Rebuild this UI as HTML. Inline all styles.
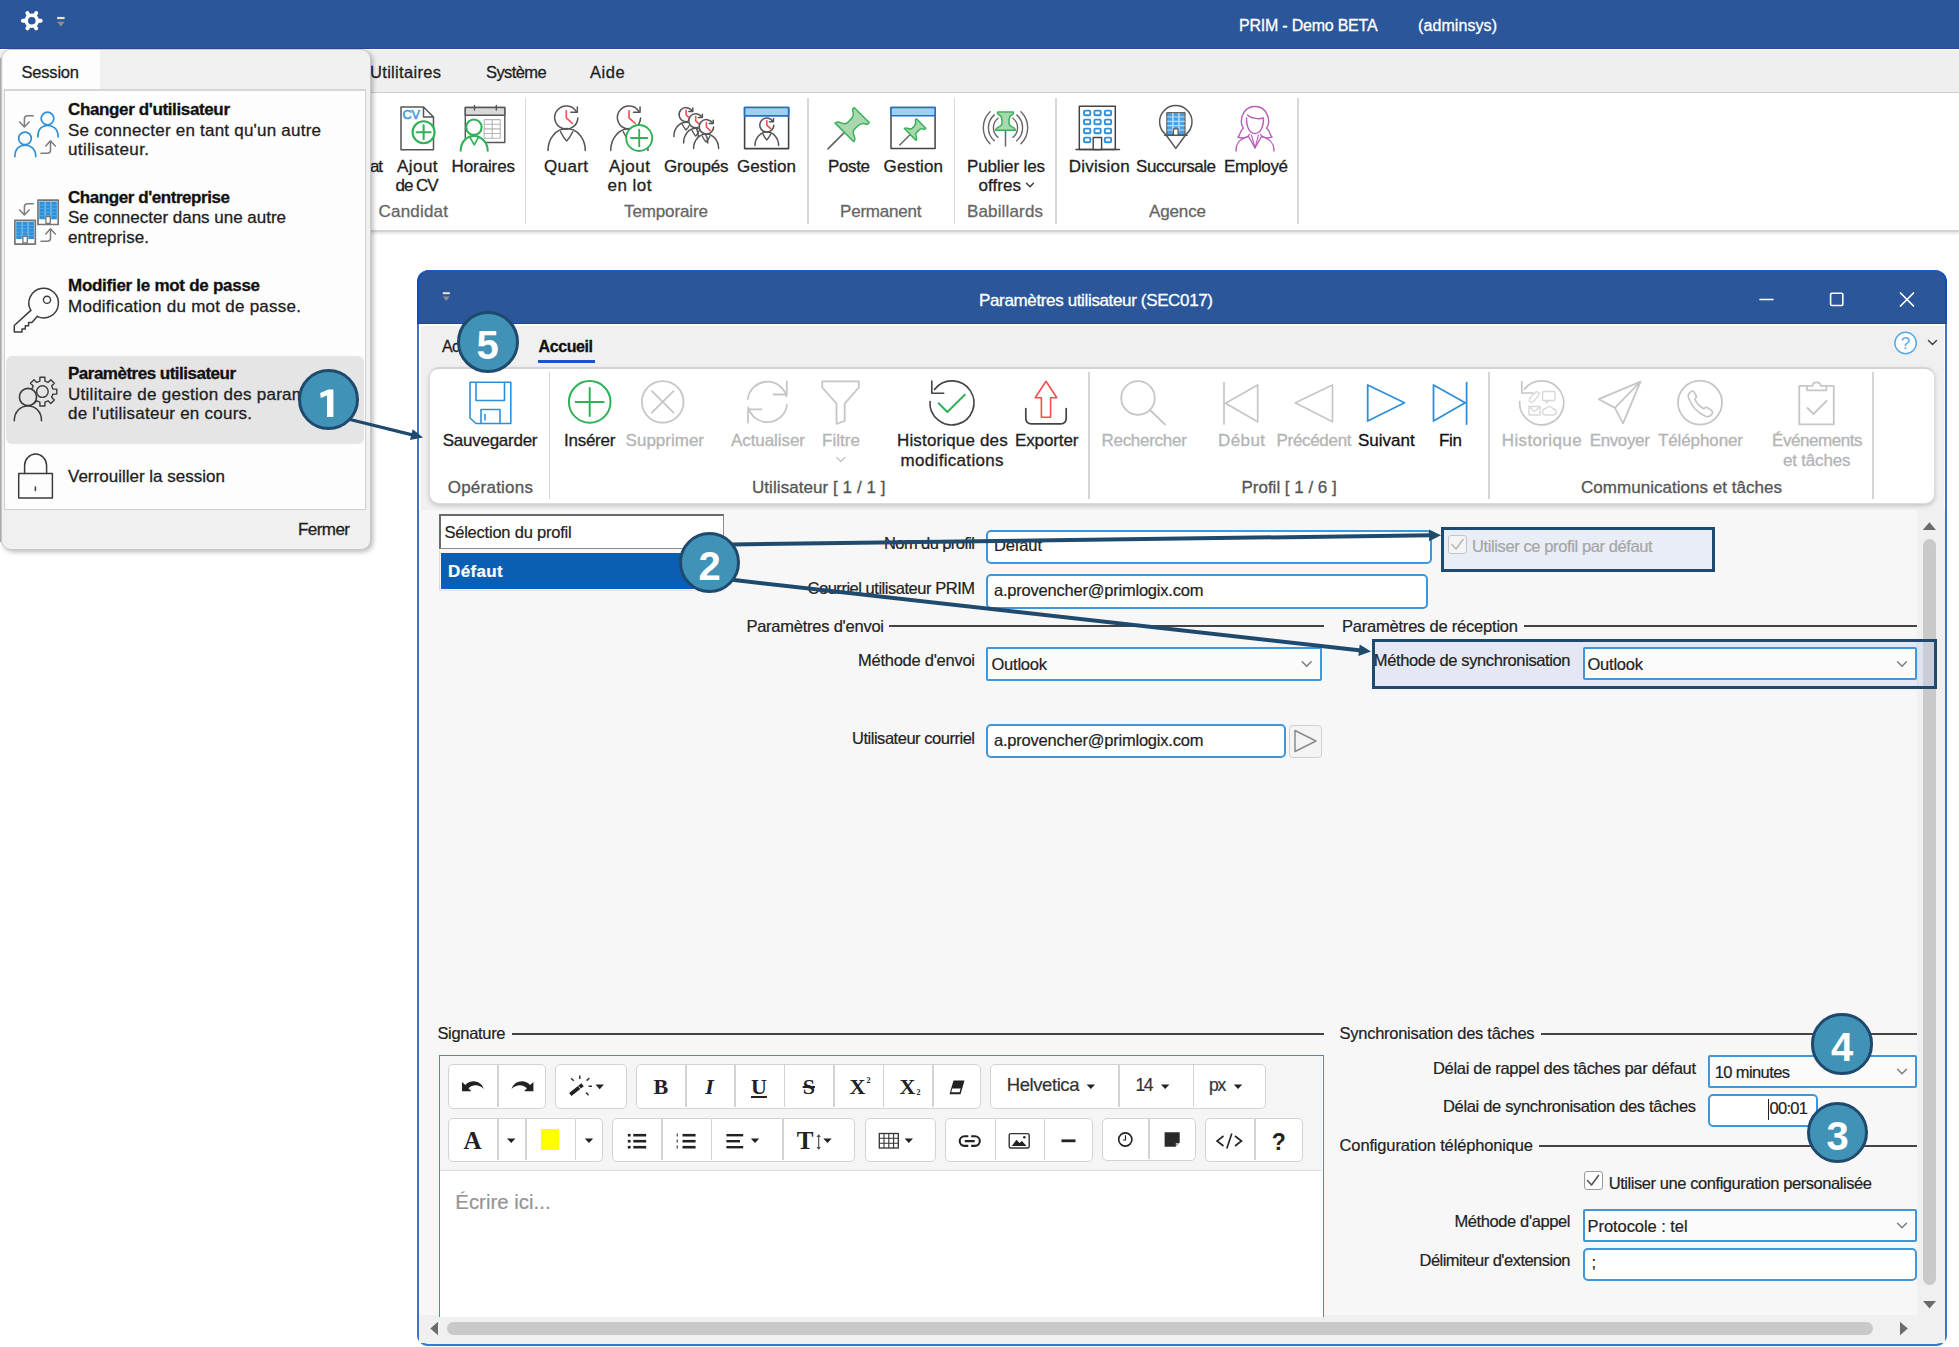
<!DOCTYPE html>
<html><head><meta charset="utf-8"><title>PRIM</title>
<style>
html,body{margin:0;padding:0;}
body{width:1959px;height:1347px;overflow:hidden;background:#fff;font-family:"Liberation Sans",sans-serif;position:relative;}
div,span.t,svg{position:absolute;box-sizing:border-box;}
span.t{white-space:nowrap;line-height:20px;height:20px;}
svg{overflow:visible;}
</style></head><body>
<div style="left:0px;top:0px;width:1959px;height:49px;background:#2b579a;"></div>
<span class="t" style="left:1239.0px;top:16.1px;font-size:16px;letter-spacing:-0.223px;color:#fff;-webkit-text-stroke:0.3px;">PRIM - Demo BETA</span>
<span class="t" style="left:1418.0px;top:16.1px;font-size:16px;letter-spacing:0.085px;color:#fff;-webkit-text-stroke:0.3px;">(adminsys)</span>
<div style="left:0px;top:47.5px;width:1959px;height:1.5px;background:#244f92;"></div>
<div style="left:0px;top:49px;width:1959px;height:44px;background:#efefef;border-top:1px solid #fff;"></div>
<span class="t" style="left:370.0px;top:61.6px;font-size:16.5px;letter-spacing:0.315px;color:#1e1e1e;-webkit-text-stroke:0.3px;">Utilitaires</span>
<span class="t" style="left:486.0px;top:61.6px;font-size:16.5px;letter-spacing:-0.581px;color:#1e1e1e;-webkit-text-stroke:0.3px;">Système</span>
<span class="t" style="left:590.0px;top:61.6px;font-size:16.5px;letter-spacing:0.525px;color:#1e1e1e;-webkit-text-stroke:0.3px;">Aide</span>
<div style="left:0px;top:92px;width:1959px;height:140px;background:#fff;border-top:1.5px solid #cfcfcf;border-bottom:2px solid #d2d2d2;box-shadow:0 2px 2px rgba(0,0,0,.10);"></div>
<div style="left:524.5px;top:98px;width:1px;height:126px;background:#d8d8d8;width:1.5px;"></div>
<div style="left:807.0px;top:98px;width:1px;height:126px;background:#d8d8d8;width:1.5px;"></div>
<div style="left:953.5px;top:98px;width:1px;height:126px;background:#d8d8d8;width:1.5px;"></div>
<div style="left:1055.1px;top:98px;width:1px;height:126px;background:#d8d8d8;width:1.5px;"></div>
<div style="left:1297.2px;top:98px;width:1px;height:126px;background:#d8d8d8;width:1.5px;"></div>
<span class="t" style="left:370.0px;top:156.6px;font-size:17px;letter-spacing:-1.178px;color:#1e1e1e;-webkit-text-stroke:0.3px;">at</span>
<span class="t" style="left:397.0px;top:156.6px;font-size:17px;letter-spacing:0.438px;color:#1e1e1e;-webkit-text-stroke:0.3px;">Ajout</span>
<span class="t" style="left:395.5px;top:175.7px;font-size:17px;letter-spacing:-1.062px;color:#1e1e1e;-webkit-text-stroke:0.3px;">de CV</span>
<span class="t" style="left:451.6px;top:156.6px;font-size:17px;letter-spacing:-0.120px;color:#1e1e1e;-webkit-text-stroke:0.3px;">Horaires</span>
<span class="t" style="left:544.0px;top:156.6px;font-size:17px;letter-spacing:0.371px;color:#1e1e1e;-webkit-text-stroke:0.3px;">Quart</span>
<span class="t" style="left:609.0px;top:156.6px;font-size:17px;letter-spacing:0.563px;color:#1e1e1e;-webkit-text-stroke:0.3px;">Ajout</span>
<span class="t" style="left:607.5px;top:175.7px;font-size:17px;letter-spacing:0.483px;color:#1e1e1e;-webkit-text-stroke:0.3px;">en lot</span>
<span class="t" style="left:664.0px;top:156.6px;font-size:17px;letter-spacing:-0.100px;color:#1e1e1e;-webkit-text-stroke:0.3px;">Groupés</span>
<span class="t" style="left:737.0px;top:156.6px;font-size:17px;letter-spacing:0.069px;color:#1e1e1e;-webkit-text-stroke:0.3px;">Gestion</span>
<span class="t" style="left:828.0px;top:156.6px;font-size:17px;letter-spacing:-0.368px;color:#1e1e1e;-webkit-text-stroke:0.3px;">Poste</span>
<span class="t" style="left:883.5px;top:156.6px;font-size:17px;letter-spacing:0.152px;color:#1e1e1e;-webkit-text-stroke:0.3px;">Gestion</span>
<span class="t" style="left:967.0px;top:156.6px;font-size:17px;letter-spacing:-0.137px;color:#1e1e1e;-webkit-text-stroke:0.3px;">Publier les</span>
<span class="t" style="left:978.6px;top:175.7px;font-size:17px;letter-spacing:0.038px;color:#1e1e1e;-webkit-text-stroke:0.3px;">offres</span>
<span class="t" style="left:1068.8px;top:156.6px;font-size:17px;letter-spacing:0.183px;color:#1e1e1e;-webkit-text-stroke:0.3px;">Division</span>
<span class="t" style="left:1136.0px;top:156.6px;font-size:17px;letter-spacing:-0.455px;color:#1e1e1e;-webkit-text-stroke:0.3px;">Succursale</span>
<span class="t" style="left:1224.0px;top:156.6px;font-size:17px;letter-spacing:-0.357px;color:#1e1e1e;-webkit-text-stroke:0.3px;">Employé</span>
<span class="t" style="left:378.6px;top:201.7px;font-size:17px;letter-spacing:0.193px;color:#666;-webkit-text-stroke:0.3px;">Candidat</span>
<span class="t" style="left:624.0px;top:201.7px;font-size:17px;letter-spacing:-0.115px;color:#666;-webkit-text-stroke:0.3px;">Temporaire</span>
<span class="t" style="left:840.0px;top:201.7px;font-size:17px;letter-spacing:-0.207px;color:#666;-webkit-text-stroke:0.3px;">Permanent</span>
<span class="t" style="left:967.0px;top:201.7px;font-size:17px;letter-spacing:0.150px;color:#666;-webkit-text-stroke:0.3px;">Babillards</span>
<span class="t" style="left:1149.0px;top:201.7px;font-size:17px;letter-spacing:-0.132px;color:#666;-webkit-text-stroke:0.3px;">Agence</span>
<div style="left:1px;top:49px;width:370px;height:501px;background:#f0f0f0;border-radius:10px;border:1px solid #c9c9c9;box-shadow:2px 2px 5px rgba(0,0,0,.28);"></div>
<div style="left:3px;top:50px;width:97.2px;height:40px;background:#fdfdfd;border-radius:8px 0 0 0;"></div>
<div style="left:0px;top:58px;width:2.2px;height:484px;background:linear-gradient(to right,#a0a0a0,#cfcfcf);"></div>
<span class="t" style="left:21.5px;top:61.8px;font-size:16.5px;letter-spacing:-0.200px;color:#1e1e1e;-webkit-text-stroke:0.3px;">Session</span>
<div style="left:4px;top:89px;width:362px;height:421px;background:#fdfdfd;border:1px solid #d0d0d0;border-top:2px solid #d6d6d6;"></div>
<div style="left:5.5px;top:355.5px;width:358.5px;height:88px;background:#e5e5e5;border-radius:6px;"></div>
<span class="t" style="left:68.0px;top:99.5px;font-size:17px;letter-spacing:-0.367px;color:#111;font-weight:bold;-webkit-text-stroke:0.3px;">Changer d'utilisateur</span>
<span class="t" style="left:68.0px;top:121.0px;font-size:17px;letter-spacing:0.221px;color:#1e1e1e;-webkit-text-stroke:0.3px;">Se connecter en tant qu'un autre</span>
<span class="t" style="left:68.0px;top:139.5px;font-size:17px;letter-spacing:0.405px;color:#1e1e1e;-webkit-text-stroke:0.3px;">utilisateur.</span>
<span class="t" style="left:68.0px;top:187.5px;font-size:17px;letter-spacing:-0.437px;color:#111;font-weight:bold;-webkit-text-stroke:0.3px;">Changer d'entreprise</span>
<span class="t" style="left:68.0px;top:208.0px;font-size:17px;letter-spacing:-0.012px;color:#1e1e1e;-webkit-text-stroke:0.3px;">Se connecter dans une autre</span>
<span class="t" style="left:68.0px;top:227.5px;font-size:17px;letter-spacing:0.068px;color:#1e1e1e;-webkit-text-stroke:0.3px;">entreprise.</span>
<span class="t" style="left:68.0px;top:276.0px;font-size:17px;letter-spacing:-0.277px;color:#111;font-weight:bold;-webkit-text-stroke:0.3px;">Modifier le mot de passe</span>
<span class="t" style="left:68.0px;top:297.0px;font-size:17px;letter-spacing:0.255px;color:#1e1e1e;-webkit-text-stroke:0.3px;">Modification du mot de passe.</span>
<span class="t" style="left:68.0px;top:363.6px;font-size:17px;letter-spacing:-0.504px;color:#111;font-weight:bold;-webkit-text-stroke:0.3px;">Paramètres utilisateur</span>
<span class="t" style="left:68.0px;top:384.7px;font-size:17px;letter-spacing:0.279px;color:#1e1e1e;-webkit-text-stroke:0.3px;">Utilitaire de gestion des param</span>
<span class="t" style="left:68.0px;top:404.0px;font-size:17px;letter-spacing:0.238px;color:#1e1e1e;-webkit-text-stroke:0.3px;">de l'utilisateur en cours.</span>
<span class="t" style="left:68.0px;top:467.0px;font-size:17px;letter-spacing:0.007px;color:#1e1e1e;-webkit-text-stroke:0.3px;">Verrouiller la session</span>
<span class="t" style="left:298.0px;top:520.0px;font-size:17px;letter-spacing:-0.555px;color:#1e1e1e;-webkit-text-stroke:0.3px;">Fermer</span>
<div style="left:417px;top:270px;width:1530px;height:1076px;background:#f0f0f0;border:2px solid #3776d3;border-radius:12px 12px 11px 11px;overflow:hidden;"></div>
<div style="left:417px;top:270px;width:1530px;height:53.5px;background:#2b579a;border-radius:12px 12px 0 0;border-left:2px solid #0f4fb3;border-right:2px solid #0f4fb3;border-top:1.5px solid #1a5cc4;border-bottom:1.5px solid #1d4990;"></div>
<div style="left:419px;top:323.5px;width:1526px;height:2px;background:#fdfcf9;"></div>
<div style="left:419px;top:323.5px;width:1.5px;height:1020px;background:#fdfcf9;"></div>
<div style="left:1943.5px;top:323.5px;width:1.5px;height:1020px;background:#fdfcf9;"></div>
<span class="t" style="left:979.0px;top:290.5px;font-size:17px;letter-spacing:-0.357px;color:#fff;-webkit-text-stroke:0.3px;">Paramètres utilisateur (SEC017)</span>
<div style="left:419px;top:510px;width:1498px;height:805px;background:#f7f7f7;"></div>
<div style="left:1917px;top:510px;width:28px;height:832px;background:#f0f0f0;"></div>
<div style="left:419px;top:1315px;width:1526px;height:28px;background:#f0f0f0;"></div>
<div style="left:428.5px;top:366.8px;width:1506.5px;height:137.2px;background:#fff;border:1px solid #dcdcdc;border-top:2px solid #d3d3d3;border-radius:10px;box-shadow:0 2px 4px rgba(0,0,0,.18);"></div>
<div style="left:548.8px;top:372px;width:1.5px;height:127px;background:#d6d6d6;"></div>
<div style="left:1088.0px;top:372px;width:1.5px;height:127px;background:#d6d6d6;"></div>
<div style="left:1488.1px;top:372px;width:1.5px;height:127px;background:#d6d6d6;"></div>
<div style="left:1872.1px;top:372px;width:1.5px;height:127px;background:#d6d6d6;"></div>
<span class="t" style="left:538.5px;top:337.4px;font-size:16px;letter-spacing:-0.402px;color:#111;font-weight:bold;-webkit-text-stroke:0.3px;">Accueil</span>
<div style="left:538px;top:359.5px;width:57px;height:3px;background:#1a56c4;"></div>
<span class="t" style="left:442.0px;top:337.4px;font-size:16px;letter-spacing:-0.672px;color:#1e1e1e;-webkit-text-stroke:0.3px;">Ac</span>
<span class="t" style="left:442.8px;top:431.0px;font-size:17px;letter-spacing:-0.264px;color:#1e1e1e;-webkit-text-stroke:0.3px;">Sauvegarder</span>
<span class="t" style="left:564.0px;top:431.0px;font-size:17px;letter-spacing:-0.252px;color:#1e1e1e;-webkit-text-stroke:0.3px;">Insérer</span>
<span class="t" style="left:625.6px;top:431.0px;font-size:17px;letter-spacing:-0.002px;color:#b4b4b4;-webkit-text-stroke:0.3px;">Supprimer</span>
<span class="t" style="left:731.0px;top:431.0px;font-size:17px;letter-spacing:-0.071px;color:#b4b4b4;-webkit-text-stroke:0.3px;">Actualiser</span>
<span class="t" style="left:822.0px;top:431.0px;font-size:17px;letter-spacing:0.045px;color:#b4b4b4;-webkit-text-stroke:0.3px;">Filtre</span>
<span class="t" style="left:897.0px;top:431.0px;font-size:17px;letter-spacing:0.156px;color:#1e1e1e;-webkit-text-stroke:0.3px;">Historique des</span>
<span class="t" style="left:900.6px;top:450.5px;font-size:17px;letter-spacing:0.307px;color:#1e1e1e;-webkit-text-stroke:0.3px;">modifications</span>
<span class="t" style="left:1015.0px;top:431.0px;font-size:17px;letter-spacing:-0.107px;color:#1e1e1e;-webkit-text-stroke:0.3px;">Exporter</span>
<span class="t" style="left:1101.5px;top:431.0px;font-size:17px;letter-spacing:-0.286px;color:#b4b4b4;-webkit-text-stroke:0.3px;">Rechercher</span>
<span class="t" style="left:1218.0px;top:431.0px;font-size:17px;letter-spacing:0.409px;color:#b4b4b4;-webkit-text-stroke:0.3px;">Début</span>
<span class="t" style="left:1276.5px;top:431.0px;font-size:17px;letter-spacing:-0.312px;color:#b4b4b4;-webkit-text-stroke:0.3px;">Précédent</span>
<span class="t" style="left:1358.0px;top:431.0px;font-size:17px;letter-spacing:-0.000px;color:#111;-webkit-text-stroke:0.3px;">Suivant</span>
<span class="t" style="left:1439.0px;top:431.0px;font-size:17px;letter-spacing:-0.308px;color:#111;-webkit-text-stroke:0.3px;">Fin</span>
<span class="t" style="left:1501.8px;top:431.0px;font-size:17px;letter-spacing:0.363px;color:#b4b4b4;-webkit-text-stroke:0.3px;">Historique</span>
<span class="t" style="left:1589.7px;top:431.0px;font-size:17px;letter-spacing:-0.377px;color:#b4b4b4;-webkit-text-stroke:0.3px;">Envoyer</span>
<span class="t" style="left:1658.0px;top:431.0px;font-size:17px;letter-spacing:-0.112px;color:#b4b4b4;-webkit-text-stroke:0.3px;">Téléphoner</span>
<span class="t" style="left:1772.0px;top:431.0px;font-size:17px;letter-spacing:-0.444px;color:#b4b4b4;-webkit-text-stroke:0.3px;">Événements</span>
<span class="t" style="left:1783.0px;top:450.5px;font-size:17px;letter-spacing:-0.198px;color:#b4b4b4;-webkit-text-stroke:0.3px;">et tâches</span>
<span class="t" style="left:447.7px;top:477.5px;font-size:17px;letter-spacing:0.238px;color:#555;-webkit-text-stroke:0.3px;">Opérations</span>
<span class="t" style="left:752.0px;top:477.5px;font-size:17px;letter-spacing:0.061px;color:#555;-webkit-text-stroke:0.3px;">Utilisateur [ 1 / 1 ]</span>
<span class="t" style="left:1241.5px;top:477.5px;font-size:17px;letter-spacing:-0.015px;color:#555;-webkit-text-stroke:0.3px;">Profil [ 1 / 6 ]</span>
<span class="t" style="left:1581.0px;top:477.5px;font-size:17px;letter-spacing:0.030px;color:#555;-webkit-text-stroke:0.3px;">Communications et tâches</span>
<div style="left:438.8px;top:514px;width:285.5px;height:34.5px;background:#fff;border:1.5px solid #8a8a8a;border-top:2px solid #6a6a6a;border-left:2px solid #6a6a6a;"></div>
<div style="left:438.5px;top:550px;width:286px;height:41px;border-left:1px solid #dcdcdc;border-bottom:1px solid #e2e2e2;border-right:1px solid #e6e6e6;"></div>
<span class="t" style="left:444.4px;top:521.9px;font-size:16.5px;letter-spacing:-0.215px;color:#222;-webkit-text-stroke:0.2px;">Sélection du profil</span>
<div style="left:441px;top:552.6px;width:283px;height:36.5px;background:#0a5fb4;"></div>
<span class="t" style="left:448.0px;top:561.6px;font-size:17px;letter-spacing:0.361px;color:#fff;font-weight:bold;-webkit-text-stroke:0.2px;">Défaut</span>
<span class="t" style="left:884.0px;top:532.7px;font-size:16.5px;letter-spacing:-0.594px;color:#222;-webkit-text-stroke:0.2px;">Nom du profil</span>
<div style="left:986.2px;top:530.3px;width:446.3px;height:33.4px;border:2px solid #3e97da;border-radius:5px;background:#fff;"></div>
<span class="t" style="left:994.0px;top:534.8px;font-size:16.5px;letter-spacing:-0.123px;color:#222;-webkit-text-stroke:0.2px;">Défaut</span>
<span class="t" style="left:807.5px;top:578.3px;font-size:16.5px;letter-spacing:-0.471px;color:#222;-webkit-text-stroke:0.2px;">Courriel utilisateur PRIM</span>
<div style="left:986.2px;top:574px;width:442.3px;height:35px;border:2px solid #3e97da;border-radius:5px;background:#fff;"></div>
<span class="t" style="left:994.0px;top:580.3px;font-size:16.5px;letter-spacing:-0.217px;color:#222;-webkit-text-stroke:0.2px;">a.provencher@primlogix.com</span>
<span class="t" style="left:746.4px;top:615.8px;font-size:16.5px;letter-spacing:-0.237px;color:#222;-webkit-text-stroke:0.2px;">Paramètres d'envoi</span>
<div style="left:889px;top:625.3px;width:435px;height:1.5px;background:#444;"></div>
<span class="t" style="left:858.0px;top:650.1px;font-size:16.5px;letter-spacing:-0.255px;color:#222;-webkit-text-stroke:0.2px;">Méthode d'envoi</span>
<div style="left:986.2px;top:646.8px;width:335.8px;height:33.8px;border:2px solid #3e97da;border-radius:5px;background:#fff;border-radius:2px;border-bottom-width:2.5px;background:#fbfbfb;"></div>
<span class="t" style="left:991.5px;top:654.3px;font-size:16.5px;letter-spacing:-0.227px;color:#222;-webkit-text-stroke:0.2px;">Outlook</span>
<span class="t" style="left:852.0px;top:728.3px;font-size:16.5px;letter-spacing:-0.476px;color:#222;-webkit-text-stroke:0.2px;">Utilisateur courriel</span>
<div style="left:986.2px;top:724.3px;width:299.6px;height:33.4px;border:2px solid #3e97da;border-radius:5px;background:#fff;"></div>
<span class="t" style="left:994.0px;top:729.8px;font-size:16.5px;letter-spacing:-0.217px;color:#222;-webkit-text-stroke:0.2px;">a.provencher@primlogix.com</span>
<div style="left:1288.8px;top:724.5px;width:33px;height:33px;background:#f4f4f4;border:1px solid #d0d0d0;border-radius:4px;"></div>
<div style="left:1440.7px;top:526.7px;width:274px;height:45px;background:#e8edf6;"></div>
<div style="left:1448px;top:535px;width:19px;height:19px;background:#f4f4f4;border:1.5px solid #c4c4c4;border-radius:3px;"></div>
<span class="t" style="left:1472.0px;top:536.3px;font-size:16.5px;letter-spacing:-0.392px;color:#a6a6a6;-webkit-text-stroke:0.2px;">Utiliser ce profil par défaut</span>
<span class="t" style="left:1342.0px;top:615.8px;font-size:16.5px;letter-spacing:-0.213px;color:#222;-webkit-text-stroke:0.2px;">Paramètres de réception</span>
<div style="left:1524px;top:625.3px;width:393px;height:1.5px;background:#444;"></div>
<div style="left:1371.5px;top:638.6px;width:546px;height:50.5px;background:#e3e8f4;"></div>
<span class="t" style="left:1373.8px;top:650.0px;font-size:16.5px;letter-spacing:-0.387px;color:#222;-webkit-text-stroke:0.2px;">Méthode de synchronisation</span>
<div style="left:1582.6px;top:646.8px;width:334.4px;height:33.6px;border:2px solid #3e97da;border-radius:5px;background:#fff;border-radius:2px;border-bottom-width:2.5px;background:#fbfbfb;"></div>
<span class="t" style="left:1587.5px;top:654.3px;font-size:16.5px;letter-spacing:-0.227px;color:#222;-webkit-text-stroke:0.2px;">Outlook</span>
<span class="t" style="left:437.4px;top:1023.3px;font-size:16.5px;letter-spacing:-0.317px;color:#222;-webkit-text-stroke:0.2px;">Signature</span>
<div style="left:511.6px;top:1033px;width:812.4px;height:1.5px;background:#444;"></div>
<div style="left:438.8px;top:1054.6px;width:885px;height:262px;background:#fff;border:1.5px solid #3a8fd0;border-bottom:none;"></div>
<div style="left:440.3px;top:1056px;width:882px;height:115px;background:#f5f5f5;border-bottom:1px solid #ddd;"></div>
<span class="t" style="left:455.3px;top:1192.3px;font-size:20.4px;letter-spacing:0.016px;color:#949494;-webkit-text-stroke:0.2px;">Écrire ici...</span>
<span class="t" style="left:1339.6px;top:1023.3px;font-size:16.5px;letter-spacing:-0.272px;color:#222;-webkit-text-stroke:0.2px;">Synchronisation des tâches</span>
<div style="left:1541px;top:1033px;width:376px;height:1.5px;background:#444;"></div>
<span class="t" style="left:1433.0px;top:1057.7px;font-size:16.5px;letter-spacing:-0.313px;color:#222;-webkit-text-stroke:0.2px;">Délai de rappel des tâches par défaut</span>
<div style="left:1708px;top:1054.8px;width:209px;height:33.2px;border:2px solid #3e97da;border-radius:5px;background:#fff;border-radius:2px;border-bottom-width:2.5px;background:#fbfbfb;"></div>
<span class="t" style="left:1714.7px;top:1062.3px;font-size:16.5px;letter-spacing:-0.601px;color:#222;-webkit-text-stroke:0.2px;">10 minutes</span>
<span class="t" style="left:1443.0px;top:1096.3px;font-size:16.5px;letter-spacing:-0.328px;color:#222;-webkit-text-stroke:0.2px;">Délai de synchronisation des tâches</span>
<div style="left:1708px;top:1093.6px;width:110px;height:33px;border:2px solid #3e97da;border-radius:5px;background:#fff;"></div>
<span class="t" style="left:1769.5px;top:1098.3px;font-size:16.5px;letter-spacing:-0.698px;color:#222;-webkit-text-stroke:0.2px;">00:01</span>
<span class="t" style="left:1339.6px;top:1135.0px;font-size:16.5px;letter-spacing:-0.153px;color:#222;-webkit-text-stroke:0.2px;">Configuration téléphonique</span>
<div style="left:1539px;top:1145.2px;width:378px;height:1.5px;background:#444;"></div>
<div style="left:1583.6px;top:1171px;width:19px;height:19px;background:#fff;border:1.5px solid #9a9a9a;border-radius:3px;"></div>
<span class="t" style="left:1608.7px;top:1172.8px;font-size:16.5px;letter-spacing:-0.433px;color:#222;-webkit-text-stroke:0.2px;">Utiliser une configuration personalisée</span>
<span class="t" style="left:1454.4px;top:1211.3px;font-size:16.5px;letter-spacing:-0.385px;color:#222;-webkit-text-stroke:0.2px;">Méthode d'appel</span>
<div style="left:1582.6px;top:1208.8px;width:334.4px;height:33.6px;border:2px solid #3e97da;border-radius:5px;background:#fff;border-radius:2px;border-bottom-width:2.5px;background:#fbfbfb;"></div>
<span class="t" style="left:1587.5px;top:1215.8px;font-size:16.5px;letter-spacing:-0.056px;color:#222;-webkit-text-stroke:0.2px;">Protocole : tel</span>
<span class="t" style="left:1419.5px;top:1250.3px;font-size:16.5px;letter-spacing:-0.515px;color:#222;-webkit-text-stroke:0.2px;">Délimiteur d'extension</span>
<div style="left:1582.6px;top:1248px;width:334.4px;height:32.5px;border:2px solid #3e97da;border-radius:5px;background:#fff;"></div>
<span class="t" style="left:1591.4px;top:1252.3px;font-size:16.5px;letter-spacing:0.000px;color:#222;-webkit-text-stroke:0.2px;">;</span>
<div style="left:1922.8px;top:539px;width:13px;height:746.4px;background:#c9c9c9;border-radius:6.5px;"></div>
<div style="left:447px;top:1322px;width:1426px;height:13px;background:#c9c9c9;border-radius:6.5px;"></div>
<svg style="left:0;top:0;" width="1959" height="1347" viewBox="0 0 1959 1347" fill="none" stroke-linecap="round" stroke-linejoin="round"><path d="M38.10 20.70 L40.70 20.70" stroke="#fff" stroke-width="3.9" stroke-linecap="round"/><path d="M34.95 26.16 L36.25 28.41" stroke="#fff" stroke-width="3.9" stroke-linecap="round"/><path d="M28.65 26.16 L27.35 28.41" stroke="#fff" stroke-width="3.9" stroke-linecap="round"/><path d="M25.50 20.70 L22.90 20.70" stroke="#fff" stroke-width="3.9" stroke-linecap="round"/><path d="M28.65 15.24 L27.35 12.99" stroke="#fff" stroke-width="3.9" stroke-linecap="round"/><path d="M34.95 15.24 L36.25 12.99" stroke="#fff" stroke-width="3.9" stroke-linecap="round"/><circle cx="31.8" cy="20.7" r="5.5" stroke="#fff" stroke-width="3.4" fill="none"/><path d="M57.1 18h7.5" stroke="#e9e2d2" stroke-width="2.2" stroke-linecap="butt"/><path d="M57.1 21.8h7.5l-3.75 4.6z" fill="#8f8f8f" stroke="none"/><path d="M442.8 293.2h7" stroke="#e9e2d2" stroke-width="2" stroke-linecap="butt"/><path d="M442.8 296.6h7l-3.5 4.3z" fill="#8f8f8f" stroke="none"/><path d="M33.3 115.8 H27.5 Q24.4 115.8 24.4 119 V126.5 M19.6 122 L24.4 127 L29.2 122" stroke="#7d7d7d" stroke-width="1.5" fill="none" /><path d="M41 153.2 H47.5 Q50.5 153.2 50.5 150 V141.3 M45.7 146 L50.5 140.8 L55.3 146" stroke="#7d7d7d" stroke-width="1.5" fill="none" /><circle cx="47.5" cy="118.5" r="6.3" stroke="#2e90d8" stroke-width="1.7" fill="none"/><path d="M37.8 136.8 C37.8 128.175 42.91 125.3 47.5 125.3 C52.09 125.3 58.2 128.175 58.2 136.8" stroke="#2e90d8" stroke-width="1.7" fill="none" /><circle cx="25" cy="138.4" r="6.3" stroke="#2e90d8" stroke-width="1.7" fill="none"/><path d="M14.9 156.4 C14.9 148.0 20.32 145.2 25 145.2 C29.68 145.2 35.7 148.0 35.7 156.4" stroke="#2e90d8" stroke-width="1.7" fill="none" /><path d="M33.3 203.8 H27.5 Q24.4 203.8 24.4 207 V214.5 M19.6 210 L24.4 215 L29.2 210" stroke="#7d7d7d" stroke-width="1.5" fill="none" /><path d="M41 241.2 H47.5 Q50.5 241.2 50.5 238 V229.3 M45.7 234 L50.5 228.8 L55.3 234" stroke="#7d7d7d" stroke-width="1.5" fill="none" /><rect x="38" y="200.2" width="20.2" height="24.3" rx="0" stroke="#757575" stroke-width="1.7" fill="#fff"/><rect x="39.3" y="201.5" width="17.599999999999998" height="17.8" fill="#2e90d8"/><path d="M45.2 201.5 V219.3" stroke="#8cc8f2" stroke-width="1.1"/><path d="M51.0 201.5 V219.3" stroke="#8cc8f2" stroke-width="1.1"/><path d="M39.3 205.1 H56.900000000000006" stroke="#5aaeea" stroke-width="0.8"/><path d="M39.3 208.6 H56.900000000000006" stroke="#5aaeea" stroke-width="0.8"/><path d="M39.3 212.2 H56.900000000000006" stroke="#5aaeea" stroke-width="0.8"/><path d="M39.3 215.7 H56.900000000000006" stroke="#5aaeea" stroke-width="0.8"/><rect x="45.9" y="216.7" width="4.4" height="6.6" rx="0" stroke="#757575" stroke-width="1.3" fill="#fff"/><rect x="14.9" y="220.4" width="20.4" height="23.8" rx="0" stroke="#757575" stroke-width="1.7" fill="#fff"/><rect x="16.2" y="221.70000000000002" width="17.799999999999997" height="17.3" fill="#2e90d8"/><path d="M22.1 221.70000000000002 V239.00000000000003" stroke="#8cc8f2" stroke-width="1.1"/><path d="M28.1 221.70000000000002 V239.00000000000003" stroke="#8cc8f2" stroke-width="1.1"/><path d="M16.2 225.2 H34.0" stroke="#5aaeea" stroke-width="0.8"/><path d="M16.2 228.6 H34.0" stroke="#5aaeea" stroke-width="0.8"/><path d="M16.2 232.1 H34.0" stroke="#5aaeea" stroke-width="0.8"/><path d="M16.2 235.5 H34.0" stroke="#5aaeea" stroke-width="0.8"/><rect x="22.900000000000002" y="236.4" width="4.4" height="6.6" rx="0" stroke="#757575" stroke-width="1.3" fill="#fff"/><path d="M30.8 310.4 L14.3 325.5 V332 H22 V329 H25.3 V325.8 H28.6 V322.6 H31.9 L37.2 316.4" stroke="#3c3c3c" stroke-width="1.5" fill="none" /><path d="M30.8 310.4 A14.8 14.8 0 1 1 37.2 316.4" stroke="#3c3c3c" stroke-width="1.5" fill="none" /><circle cx="47" cy="299.8" r="3.6" stroke="#3c3c3c" stroke-width="1.4" fill="none"/><path d="M56.78 389.09 L56.78 394.11 L52.90 394.12 L51.61 397.24 L54.34 400.00 L50.80 403.54 L48.04 400.81 L44.92 402.10 L44.91 405.98 L39.89 405.98 L39.88 402.10 L36.76 400.81 L34.00 403.54 L30.46 400.00 L33.19 397.24 L31.90 394.12 L28.02 394.11 L28.02 389.09 L31.90 389.08 L33.19 385.96 L30.46 383.20 L34.00 379.66 L36.76 382.39 L39.88 381.10 L39.89 377.22 L44.91 377.22 L44.92 381.10 L48.04 382.39 L50.80 379.66 L54.34 383.20 L51.61 385.96 L52.90 389.08Z" stroke="#3c3c3c" stroke-width="1.4" fill="none" /><circle cx="42.4" cy="391.6" r="5.8" stroke="#3c3c3c" stroke-width="1.4" fill="none"/><circle cx="28" cy="397" r="8.6" stroke="#3c3c3c" stroke-width="1.6" fill="#e5e5e5"/><path d="M14.3 420.7 C14.3 411 21 406 28 406 C35 406 41.5 411 41.5 420.7" stroke="#3c3c3c" stroke-width="1.6" fill="#e5e5e5" /><rect x="18.7" y="473.6" width="33.7" height="24.4" rx="0" stroke="#3c3c3c" stroke-width="1.5" fill="none"/><path d="M24.6 473.6 V465.5 A11 11.4 0 0 1 46.6 465.5 V473.6" stroke="#3c3c3c" stroke-width="1.5" fill="none" /><path d="M35.4 487 V490.5" stroke="#3c3c3c" stroke-width="1.5" fill="none" /><path d="M401 107 H423.5 L433.5 117 V149.8 H401 Z M423.5 107 V117 H433.5" stroke="#555" stroke-width="1.5" fill="#fff" /><text x="402.6" y="119.3" font-family="Liberation Sans" font-size="12.8" fill="#3a9be0" stroke="#3a9be0" stroke-width="0.55" textLength="17.5">CV</text><circle cx="423.6" cy="132.3" r="11" stroke="#2fb257" stroke-width="2.1" fill="#fff"/><path d="M416.6 132.3 H430.6 M423.6 125.3 V139.3" stroke="#2fb257" stroke-width="2.1" fill="none" /><rect x="465.3" y="107.5" width="39.5" height="35" rx="0" stroke="#555" stroke-width="1.4" fill="#fff"/><rect x="465.3" y="107.5" width="39.5" height="7.8" rx="0" stroke="#555" stroke-width="1.4" fill="#d9d9d9"/><path d="M474.5 105.5 V110 M496.3 105.5 V110" stroke="#555" stroke-width="1.4" fill="none" /><rect x="484.2" y="119.6" width="16" height="18.6" rx="0" stroke="#b5b5b5" stroke-width="1.1" fill="#fff"/><path d="M484.2 124.25 H500.2" stroke="#b5b5b5" stroke-width="1.1"/><path d="M484.2 128.9 H500.2" stroke="#b5b5b5" stroke-width="1.1"/><path d="M484.2 133.55 H500.2" stroke="#b5b5b5" stroke-width="1.1"/><path d="M492.2 119.6 V138.2" stroke="#b5b5b5" stroke-width="1.1"/><circle cx="473.9" cy="127.2" r="7.7" stroke="#2fb257" stroke-width="2.1" fill="#fff"/><path d="M460.7 150.7 C460.7 142 467 136 473.9 136 C480.8 136 487.7 142 487.7 150.7" stroke="#2fb257" stroke-width="2.1" fill="#fff" /><path d="M469.6 136.6 L474.2 144.8 L478.8 136.6" stroke="#2fb257" stroke-width="1.7" fill="none" /><path d="M577.89 117.90 A11.6 11.6 0 1 1 576.35 111.70" stroke="#555" stroke-width="1.5" fill="none" /><path d="M570.85 112.30 H577.35 V106.90" stroke="#555" stroke-width="1.5" fill="none" /><path d="M566.30 110.70 V117.80 L572.50 123.50" stroke="#f05050" stroke-width="1.6500000000000001" fill="none" /><path d="M548 150.5 A18.649999999999977 22.0 0 0 1 585.3 150.5" stroke="#555" stroke-width="1.5" fill="none" /><path d="M560.45 131.60 Q563.65 138.00 566.65 141.00 Q569.65 138.00 572.85 131.60" stroke="#555" stroke-width="1.35" fill="none" /><path d="M640.59 117.90 A11.6 11.6 0 1 1 639.05 111.70" stroke="#555" stroke-width="1.5" fill="none" /><path d="M633.55 112.30 H640.05 V106.90" stroke="#555" stroke-width="1.5" fill="none" /><path d="M629.00 110.70 V117.80 L635.20 123.50" stroke="#f05050" stroke-width="1.6500000000000001" fill="none" /><path d="M610.7 150.5 A18.649999999999977 22.0 0 0 1 648 150.5" stroke="#555" stroke-width="1.5" fill="none" /><path d="M623.15 131.60 Q626.35 138.00 629.35 141.00 Q632.35 138.00 635.55 131.60" stroke="#555" stroke-width="1.35" fill="none" /><circle cx="639.2" cy="138" r="13" stroke="#2fb257" stroke-width="1.9" fill="#fff"/><path d="M631 138 H647.4 M639.2 129.8 V146.2" stroke="#2fb257" stroke-width="1.9" fill="none" /><path d="M693.10 114.84 A7 7 0 1 1 692.16 111.10" stroke="#555" stroke-width="1.5" fill="none" /><path d="M688.75 111.47 H692.78 V108.12" stroke="#555" stroke-width="1.5" fill="none" /><path d="M686.10 110.38 V114.79 L689.94 118.32" stroke="#f05050" stroke-width="1.6500000000000001" fill="none" /><path d="M673.9 136.4 A12.199999999999989 14.300000000000011 0 0 1 698.3 136.4" stroke="#555" stroke-width="1.5" fill="none" /><path d="M682.26 124.21 Q684.24 128.18 686.10 130.04 Q687.96 128.18 689.94 124.21" stroke="#555" stroke-width="1.35" fill="none" /><circle cx="695.7" cy="120.7" r="7.8" fill="#fff" stroke="none"/><path d="M702.70 120.94 A7 7 0 1 1 701.76 117.20" stroke="#555" stroke-width="1.5" fill="none" /><path d="M698.35 117.57 H702.38 V114.22" stroke="#555" stroke-width="1.5" fill="none" /><path d="M695.70 116.48 V120.89 L699.54 124.42" stroke="#f05050" stroke-width="1.6500000000000001" fill="none" /><path d="M683.6 142.9 A12.099999999999966 14.700000000000017 0 0 1 707.8 142.9" stroke="#555" stroke-width="1.5" fill="none" /><path d="M691.86 130.31 Q693.84 134.28 695.70 136.14 Q697.56 134.28 699.54 130.31" stroke="#555" stroke-width="1.35" fill="none" /><circle cx="706.4" cy="126.8" r="8" fill="#fff" stroke="none"/><path d="M713.60 127.05 A7.2 7.2 0 1 1 712.64 123.20" stroke="#555" stroke-width="1.5" fill="none" /><path d="M709.23 123.57 H713.26 V120.22" stroke="#555" stroke-width="1.5" fill="none" /><path d="M706.40 122.58 V126.99 L710.24 130.52" stroke="#f05050" stroke-width="1.6500000000000001" fill="none" /><path d="M693.6 148.6 A12.5 14.5 0 0 1 718.6 148.6" stroke="#555" stroke-width="1.5" fill="none" /><path d="M702.26 136.21 Q704.24 140.18 706.10 142.04 Q707.96 140.18 709.94 136.21" stroke="#555" stroke-width="1.35" fill="none" /><rect x="744.6" y="107.5" width="44" height="41.1" rx="0" stroke="#444" stroke-width="1.6" fill="#fff"/><rect x="744.6" y="107.5" width="44" height="8.3" rx="0" stroke="#1f72c8" stroke-width="1.7" fill="#a0cff3"/><path d="M773.80 125.24 A7 7 0 1 1 772.86 121.50" stroke="#555" stroke-width="1.5" fill="none" /><path d="M769.45 121.87 H773.48 V118.52" stroke="#555" stroke-width="1.5" fill="none" /><path d="M766.80 120.78 V125.19 L770.64 128.72" stroke="#f05050" stroke-width="1.6500000000000001" fill="none" /><path d="M755 145.4 A11.800000000000011 13.400000000000006 0 0 1 778.6 145.4" stroke="#555" stroke-width="1.5" fill="none" /><path d="M762.96 134.11 Q764.94 138.08 766.80 139.94 Q768.66 138.08 770.64 134.11" stroke="#555" stroke-width="1.35" fill="none" /><g transform="translate(848.7 128.2) rotate(45) scale(1.0)"><path d="M0 6 V29.3" stroke="#666" stroke-width="1.70" fill="none"/><path d="M-10.5 -18.5 H10.5 Q11.5 -16 9 -15 Q5 -13 4.8 -8 V-3 Q5 0 9 1.5 Q13 3 13.2 6 H-13.2 Q-13 3 -9 1.5 Q-5 0 -4.8 -3 V-8 Q-5 -13 -9 -15 Q-11.5 -16 -10.5 -18.5 Z" stroke="#3bb25a" stroke-width="1.50" fill="#a9d8ae" stroke-linejoin="round"/></g><rect x="891" y="107.5" width="44.1" height="41" rx="0" stroke="#444" stroke-width="1.5" fill="#fff"/><rect x="891" y="107.5" width="44.1" height="8.3" rx="0" stroke="#1f72c8" stroke-width="1.6" fill="#a0cff3"/><g transform="translate(912.9 131.8) rotate(45) scale(0.63)"><path d="M0 6 V29.5" stroke="#666" stroke-width="2.38" fill="none"/><path d="M-10.5 -18.5 H10.5 Q11.5 -16 9 -15 Q5 -13 4.8 -8 V-3 Q5 0 9 1.5 Q13 3 13.2 6 H-13.2 Q-13 3 -9 1.5 Q-5 0 -4.8 -3 V-8 Q-5 -13 -9 -15 Q-11.5 -16 -10.5 -18.5 Z" stroke="#3bb25a" stroke-width="2.38" fill="#a9d8ae" stroke-linejoin="round"/></g><g transform="translate(1005.5 125.8) rotate(0) scale(0.743)"><path d="M0 6 V27.2" stroke="#666" stroke-width="2.02" fill="none"/><path d="M-10.5 -18.5 H10.5 Q11.5 -16 9 -15 Q5 -13 4.8 -8 V-3 Q5 0 9 1.5 Q13 3 13.2 6 H-13.2 Q-13 3 -9 1.5 Q-5 0 -4.8 -3 V-8 Q-5 -13 -9 -15 Q-11.5 -16 -10.5 -18.5 Z" stroke="#3bb25a" stroke-width="2.02" fill="#a9d8ae" stroke-linejoin="round"/></g><path d="M1012.95 118.27 A12.1 12.1 0 0 1 1012.95 137.33" stroke="#666" stroke-width="1.4" fill="none" /><path d="M998.05 118.27 A12.1 12.1 0 0 0 998.05 137.33" stroke="#666" stroke-width="1.4" fill="none" /><path d="M1016.72 114.89 A17.1 17.1 0 0 1 1016.72 140.71" stroke="#666" stroke-width="1.4" fill="none" /><path d="M994.28 114.89 A17.1 17.1 0 0 0 994.28 140.71" stroke="#666" stroke-width="1.4" fill="none" /><path d="M1020.92 111.83 A22.2 22.2 0 0 1 1020.92 143.77" stroke="#666" stroke-width="1.4" fill="none" /><path d="M990.08 111.83 A22.2 22.2 0 0 0 990.08 143.77" stroke="#666" stroke-width="1.4" fill="none" /><rect x="1079.3" y="106.3" width="36" height="43.2" rx="0" stroke="#444" stroke-width="1.5" fill="#fff"/><path d="M1076 149.5 H1119.5" stroke="#444" stroke-width="1.5" fill="none" /><rect x="1084.0" y="110.6" width="6.3" height="4.6" rx="1" stroke="#2e90d8" stroke-width="1.9" fill="#fff"/><rect x="1094.4" y="110.6" width="6.3" height="4.6" rx="1" stroke="#2e90d8" stroke-width="1.9" fill="#fff"/><rect x="1104.8" y="110.6" width="6.3" height="4.6" rx="1" stroke="#2e90d8" stroke-width="1.9" fill="#fff"/><rect x="1084.0" y="119.6" width="6.3" height="4.6" rx="1" stroke="#2e90d8" stroke-width="1.9" fill="#fff"/><rect x="1094.4" y="119.6" width="6.3" height="4.6" rx="1" stroke="#2e90d8" stroke-width="1.9" fill="#fff"/><rect x="1104.8" y="119.6" width="6.3" height="4.6" rx="1" stroke="#2e90d8" stroke-width="1.9" fill="#fff"/><rect x="1084.0" y="128.6" width="6.3" height="4.6" rx="1" stroke="#2e90d8" stroke-width="1.9" fill="#fff"/><rect x="1094.4" y="128.6" width="6.3" height="4.6" rx="1" stroke="#2e90d8" stroke-width="1.9" fill="#fff"/><rect x="1104.8" y="128.6" width="6.3" height="4.6" rx="1" stroke="#2e90d8" stroke-width="1.9" fill="#fff"/><rect x="1084.0" y="137.6" width="6.3" height="4.6" rx="1" stroke="#2e90d8" stroke-width="1.9" fill="#fff"/><rect x="1104.8" y="137.6" width="6.3" height="4.6" rx="1" stroke="#2e90d8" stroke-width="1.9" fill="#fff"/><rect x="1093.2" y="137.5" width="8.4" height="12" rx="0" stroke="#444" stroke-width="1.4" fill="#fff"/><path d="M1165.5 134.3 A16.2 16.2 0 1 1 1186.1 134.3 L1175.8 148.4 Z" stroke="#555" stroke-width="1.5" fill="#fff" /><rect x="1166.9" y="112.6" width="18" height="22.6" rx="0" stroke="#666" stroke-width="1.4" fill="#4aa0e2"/><path d="M1172.9 113.5 V131" stroke="#b9dcf6" stroke-width="1.5"/><path d="M1178.9 113.5 V131" stroke="#b9dcf6" stroke-width="1.5"/><path d="M1167.6 117 H1184.2" stroke="#b9dcf6" stroke-width="1.2"/><path d="M1167.6 121.3 H1184.2" stroke="#b9dcf6" stroke-width="1.2"/><path d="M1167.6 125.6 H1184.2" stroke="#b9dcf6" stroke-width="1.2"/><path d="M1167.6 130 H1184.2" stroke="#b9dcf6" stroke-width="1.2"/><path d="M1164.5 135.3 H1187.1" stroke="#555" stroke-width="1.4" fill="none" /><rect x="1173.5" y="128.8" width="4.6" height="6.2" rx="0" stroke="#555" stroke-width="1.2" fill="#fff"/><path d="M1243.5 128 C1239 124 1241 106.5 1255 106.5 C1269 106.5 1271 124 1266.5 128 C1270 131 1270 135 1272 137 C1266 139 1262 137 1260.5 134.5 M1243.5 128 C1240 131 1240 135 1238 137 C1244 139 1248 137 1249.5 134.5" stroke="#b65cb8" stroke-width="1.4" fill="none" /><path d="M1246.5 118 C1246.5 128 1250 133.5 1255 133.5 C1260 133.5 1263.5 128 1263.5 118 C1259 119.5 1251 118.5 1247.5 115" stroke="#b65cb8" stroke-width="1.4" fill="none" /><path d="M1236 151 C1236 142 1241 138.5 1248.5 136.5 L1255 148 L1261.5 136.5 C1269 138.5 1274 142 1274 151" stroke="#b65cb8" stroke-width="1.4" fill="none" /><path d="M1251.5 135 L1255 148 L1258.5 135" stroke="#b65cb8" stroke-width="1.1" fill="none" /><path d="M470 382.3 H510.8 V423.5 H476 L470 418 Z M476 382.3 V400.5 H504.5 V382.3 M481 423.5 V409.5 H500 V423.5 M485 414.5 V420" stroke="#2e90d8" stroke-width="1.6" fill="none" /><circle cx="589.7" cy="401.9" r="20.8" stroke="#2fb257" stroke-width="2" fill="none"/><path d="M575.7 401.9 H603.7 M589.7 387.9 V415.9" stroke="#2fb257" stroke-width="2" fill="none" /><circle cx="662.7" cy="401.9" r="20.8" stroke="#c6c6c6" stroke-width="1.8" fill="none"/><path d="M651.9 391.1 L673.5 412.7 M673.5 391.1 L651.9 412.7" stroke="#c6c6c6" stroke-width="1.8" fill="none" /><path d="M747.8 399 A19.8 19.8 0 0 1 786.6 396.5 M787 405 A19.8 19.8 0 0 1 748.2 407.3" stroke="#c6c6c6" stroke-width="1.8" fill="none" /><path d="M773.5 394.5 H786.8 V381.5 M761.5 409.3 H748 V422.5" stroke="#c6c6c6" stroke-width="1.8" fill="none" /><path d="M822.3 381.3 H858.8 V387.5 L844.7 403.6 V421 L836.5 423.8 V403.6 L822.3 387.5 Z" stroke="#c6c6c6" stroke-width="1.8" fill="none" /><path d="M836.8 457.5 L840.8 461.5 L844.8 457.5" stroke="#c6c6c6" stroke-width="1.4" fill="none" /><path d="M930 401.5 A22 22 0 1 0 934.5 389.5" stroke="#444" stroke-width="1.6" fill="none" /><path d="M931.8 381 V393.2 H943.7" stroke="#444" stroke-width="1.6" fill="none" /><path d="M938.6 403.2 L947.4 412 L964.8 394.7" stroke="#2fb257" stroke-width="2" fill="none" /><path d="M1025.8 408.5 V418 Q1025.8 423.8 1031.5 423.8 H1060.5 Q1066.2 423.8 1066.2 418 V408.5" stroke="#444" stroke-width="1.7" fill="none" /><path d="M1046 381.3 L1056.8 397.8 H1050.6 V417.2 H1041.4 V397.8 H1035.2 Z" stroke="#f05050" stroke-width="1.6" fill="none" /><circle cx="1138" cy="398" r="16.8" stroke="#c6c6c6" stroke-width="1.8" fill="none"/><path d="M1150 410 L1165 424.5" stroke="#c6c6c6" stroke-width="1.8" fill="none" /><path d="M1224 382.7 V424 M1225.5 403.3 L1257.7 385 V421.8 Z" stroke="#c6c6c6" stroke-width="1.7" fill="none" /><path d="M1295.3 402.8 L1332.5 385 V421.8 Z" stroke="#c6c6c6" stroke-width="1.7" fill="none" /><path d="M1404.5 402.8 L1367.7 385 V421 Z" stroke="#2e90d8" stroke-width="1.8" fill="none" /><path d="M1466.6 382.7 V424 M1465.2 402.8 L1433.5 385 V421 Z" stroke="#2e90d8" stroke-width="1.8" fill="none" /><path d="M1519.7 401.5 A22 22 0 1 0 1524.3 389.3" stroke="#c6c6c6" stroke-width="1.7" fill="none" /><path d="M1521.8 381.7 V393 H1532.8" stroke="#c6c6c6" stroke-width="1.7" fill="none" /><rect x="1542.5" y="391.5" width="12.5" height="9" rx="1.5" stroke="#d8d8d8" stroke-width="1.4" fill="none"/><path d="M1546 400.5 V403 L1549 400.5" stroke="#d8d8d8" stroke-width="1.2" fill="none" /><path d="M1529.5 401.5 C1528 398 1534 394 1536.5 391.5 L1539.5 393 C1538 397 1535 400 1532 402.5 Z" stroke="#d8d8d8" stroke-width="1.3" fill="none" /><rect x="1529" y="406.5" width="11" height="8.5" rx="0" stroke="#d8d8d8" stroke-width="1.4" fill="none"/><path d="M1529 406.5 L1534.5 411.5 L1540 406.5" stroke="#d8d8d8" stroke-width="1.2" fill="none" /><path d="M1545 415 H1553.5 A3 3 0 0 0 1553 409 A4 4 0 0 0 1546 408.5 A3.3 3.3 0 0 0 1545 415 Z" stroke="#d8d8d8" stroke-width="1.3" fill="none" /><path d="M1640.5 381.7 L1598.8 399.2 L1614.9 407.9 L1623 423.4 Z M1614.9 407.9 L1640.5 381.7" stroke="#c6c6c6" stroke-width="1.8" fill="none" /><circle cx="1700" cy="402.6" r="22" stroke="#c6c6c6" stroke-width="1.8" fill="none"/><path d="M1690.5 392 C1688.5 393.5 1687.5 395.5 1689 399 C1692 406.5 1697.5 412.5 1705 416 C1708.5 417.5 1710.5 416.5 1712 414 C1713 412.5 1712.5 411 1711 410 L1707.5 407.8 C1706 406.8 1704.8 407.3 1703.8 408.8 C1699.5 406.5 1696.5 403 1694.8 399.2 C1696.3 398.2 1696.8 397 1696 395.5 L1694.2 392.3 C1693.3 390.8 1692 390.8 1690.5 392 Z" stroke="#c6c6c6" stroke-width="1.7" fill="none" /><rect x="1799.3" y="385.8" width="34.5" height="38.5" rx="0" stroke="#c6c6c6" stroke-width="1.8" fill="none"/><path d="M1807 390.3 V386 H1812.5 A4.2 4.2 0 0 1 1820.8 386 H1826.3 V390.3 Z" stroke="#c6c6c6" stroke-width="1.7" fill="#fff" /><path d="M1807.5 408 L1813.5 414 L1826.5 401" stroke="#c6c6c6" stroke-width="1.8" fill="none" /><circle cx="1905.6" cy="343" r="10.7" stroke="#5aa9e6" stroke-width="1.5" fill="#fff"/><text x="1905.6" y="349.3" text-anchor="middle" font-family="Liberation Sans" font-size="17" fill="#5aa9e6">?</text><path d="M1928.5 340.5 L1932.5 344.5 L1936.5 340.5" stroke="#444" stroke-width="1.5" fill="none" /><path d="M1760 299.5 H1773" stroke="#fff" stroke-width="1.6" fill="none" /><rect x="1830.6" y="293.3" width="12.2" height="12.2" rx="1.2" stroke="#fff" stroke-width="1.6" fill="none"/><path d="M1900.5 293 L1913.5 306 M1913.5 293 L1900.5 306" stroke="#fff" stroke-width="1.7" fill="none" /><path d="M1026.5 183.3 L1030 186.8 L1033.5 183.3" stroke="#333" stroke-width="1.3" fill="none" /><path d="M1302.2 661.8 L1306.7 666.3 L1311.2 661.8" stroke="#7a7a7a" stroke-width="1.4" fill="none" /><path d="M1897.5 661.8 L1902 666.3 L1906.5 661.8" stroke="#7a7a7a" stroke-width="1.4" fill="none" /><path d="M1897.5 1069.3 L1902 1073.8 L1906.5 1069.3" stroke="#7a7a7a" stroke-width="1.4" fill="none" /><path d="M1897.5 1223.3 L1902 1227.8 L1906.5 1223.3" stroke="#7a7a7a" stroke-width="1.4" fill="none" /><path d="M1295 730.5 L1316 741 L1295 751.5 Z" stroke="#8a8a8a" stroke-width="1.5" fill="none" /><path d="M1452 544.5 L1456 549 L1463 539.5" stroke="#b9b9b9" stroke-width="1.6" fill="none" /><path d="M1587.5 1180.5 L1591.5 1185 L1598.5 1175.5" stroke="#555" stroke-width="1.6" fill="none" /><path d="M1922.8 530 L1929.4 522.3 L1936 530 Z M1923 1301 L1929.5 1308.6 L1936 1301 Z M438 1321.8 L430.3 1328.5 L438 1335.2 Z M1900 1321.8 L1907.8 1328.5 L1900 1335.2 Z" fill="#6b6b6b" stroke="none"/></svg>
<div style="left:447.9px;top:1064.3px;width:98.10000000000002px;height:44.3px;background:#fff;border:1.5px solid #d3d3d3;border-radius:5px;"><div style="left:48.4px;top:0;width:1.5px;height:41.3px;background:#d3d3d3;"></div></div>
<div style="left:555.2px;top:1064.3px;width:71.69999999999993px;height:44.3px;background:#fff;border:1.5px solid #d3d3d3;border-radius:5px;"></div>
<div style="left:636px;top:1064.3px;width:345.4px;height:44.3px;background:#fff;border:1.5px solid #d3d3d3;border-radius:5px;"><div style="left:48.3px;top:0;width:1.5px;height:41.3px;background:#d3d3d3;"></div><div style="left:97.2px;top:0;width:1.5px;height:41.3px;background:#d3d3d3;"></div><div style="left:146.7px;top:0;width:1.5px;height:41.3px;background:#d3d3d3;"></div><div style="left:196.0px;top:0;width:1.5px;height:41.3px;background:#d3d3d3;"></div><div style="left:245.8px;top:0;width:1.5px;height:41.3px;background:#d3d3d3;"></div><div style="left:295.0px;top:0;width:1.5px;height:41.3px;background:#d3d3d3;"></div></div>
<div style="left:989.6px;top:1064.3px;width:276.6px;height:44.3px;background:#fff;border:1.5px solid #d3d3d3;border-radius:5px;"><div style="left:127.7px;top:0;width:1.5px;height:41.3px;background:#d3d3d3;"></div><div style="left:202.4px;top:0;width:1.5px;height:41.3px;background:#d3d3d3;"></div></div>
<div style="left:447.9px;top:1118.2px;width:155.0px;height:44.3px;background:#fff;border:1.5px solid #d3d3d3;border-radius:5px;"><div style="left:48.4px;top:0;width:1.5px;height:41.3px;background:#d3d3d3;"></div><div style="left:76.5px;top:0;width:1.5px;height:41.3px;background:#d3d3d3;"></div><div style="left:125.9px;top:0;width:1.5px;height:41.3px;background:#d3d3d3;"></div></div>
<div style="left:612.3px;top:1118.2px;width:242.70000000000005px;height:44.3px;background:#fff;border:1.5px solid #d3d3d3;border-radius:5px;"><div style="left:47.9px;top:0;width:1.5px;height:41.3px;background:#d3d3d3;"></div><div style="left:97.4px;top:0;width:1.5px;height:41.3px;background:#d3d3d3;"></div><div style="left:169.2px;top:0;width:1.5px;height:41.3px;background:#d3d3d3;"></div></div>
<div style="left:864.5px;top:1118.2px;width:71.79999999999995px;height:44.3px;background:#fff;border:1.5px solid #d3d3d3;border-radius:5px;"></div>
<div style="left:945px;top:1118.2px;width:148px;height:44.3px;background:#fff;border:1.5px solid #d3d3d3;border-radius:5px;"><div style="left:48.5px;top:0;width:1.5px;height:41.3px;background:#d3d3d3;"></div><div style="left:97.8px;top:0;width:1.5px;height:41.3px;background:#d3d3d3;"></div></div>
<div style="left:1101.8px;top:1117.9px;width:94.40000000000009px;height:43px;background:#fff;border:1.5px solid #d3d3d3;border-radius:5px;"><div style="left:45.5px;top:0;width:1.5px;height:40px;background:#d3d3d3;"></div></div>
<div style="left:1204.7px;top:1118.2px;width:98.59999999999991px;height:44.3px;background:#fff;border:1.5px solid #d3d3d3;border-radius:5px;"><div style="left:48.8px;top:0;width:1.5px;height:41.3px;background:#d3d3d3;"></div></div>
<span class="t" style="left:620.8px;width:80px;text-align:center;top:1077.4px;font-size:22px;color:#222;font-family:'Liberation Serif',serif;font-weight:bold;">B</span>
<span class="t" style="left:669.5px;width:80px;text-align:center;top:1077.4px;font-size:22px;color:#222;font-family:'Liberation Serif',serif;font-weight:bold;font-style:italic;">I</span>
<span class="t" style="left:719.0px;width:80px;text-align:center;top:1077.4px;font-size:22px;color:#222;font-family:'Liberation Serif',serif;font-weight:bold;text-decoration:underline;text-decoration-thickness:1.5px;text-underline-offset:2px;">U</span>
<span class="t" style="left:768.8px;width:80px;text-align:center;top:1077.4px;font-size:22px;color:#222;font-family:'Liberation Serif',serif;font-weight:bold;text-decoration:line-through;text-decoration-thickness:2px;">S</span>
<span class="t" style="left:819.5px;width:80px;text-align:center;top:1077.4px;font-size:22px;color:#222;font-family:'Liberation Serif',serif;font-weight:bold;">X<span style="font-size:8px;position:relative;top:-11px;left:1px;">2</span></span>
<span class="t" style="left:869.5px;width:80px;text-align:center;top:1077.4px;font-size:22px;color:#222;font-family:'Liberation Serif',serif;font-weight:bold;">X<span style="font-size:8px;position:relative;top:1px;left:1px;">2</span></span>
<span class="t" style="left:432.6px;width:80px;text-align:center;top:1130.9px;font-size:25px;color:#222;font-family:'Liberation Serif',serif;font-weight:bold;">A</span>
<span class="t" style="left:765.0px;width:80px;text-align:center;top:1131.1px;font-size:25px;color:#222;font-family:'Liberation Serif',serif;font-weight:bold;">T</span>
<span class="t" style="left:1006.7px;top:1074.9px;font-size:18.5px;letter-spacing:-0.411px;color:#333;-webkit-text-stroke:0.2px;">Helvetica</span>
<span class="t" style="left:1135.4px;top:1075.2px;font-size:17.5px;letter-spacing:-1.365px;color:#333;-webkit-text-stroke:0.2px;">14</span>
<span class="t" style="left:1209.0px;top:1075.2px;font-size:17.5px;letter-spacing:-1.183px;color:#333;-webkit-text-stroke:0.2px;">px</span>
<span class="t" style="left:1238.8px;width:80px;text-align:center;top:1131.5px;font-size:23px;color:#222;font-weight:bold;">?</span>
<div style="left:541px;top:1129.2px;width:18px;height:20.4px;background:#ffff00;"></div>
<svg style="left:0;top:0" width="1959" height="1347" viewBox="0 0 1959 1347" fill="none"><path d="M595.5 1084.6000000000001 H603.9000000000001 L599.7 1089.2 Z" fill="#222" stroke="none"/><path d="M1086.6 1084.5 H1095.0 L1090.8 1089.1 Z" fill="#222" stroke="none"/><path d="M1161.0 1084.5 H1169.4 L1165.2 1089.1 Z" fill="#222" stroke="none"/><path d="M1233.8 1084.5 H1242.2 L1238 1089.1 Z" fill="#222" stroke="none"/><path d="M507.0 1138.5 H515.4 L511.2 1143.1 Z" fill="#222" stroke="none"/><path d="M584.8 1138.5 H593.2 L589 1143.1 Z" fill="#222" stroke="none"/><path d="M750.8 1138.5 H759.2 L755 1143.1 Z" fill="#222" stroke="none"/><path d="M823.3 1138.5 H831.7 L827.5 1143.1 Z" fill="#222" stroke="none"/><path d="M904.5999999999999 1138.5 H913.0 L908.8 1143.1 Z" fill="#222" stroke="none"/><path d="M462 1082 L462 1091.2 L471.3 1091.2 L468.5 1088.3 C472.5 1084.3 478.8 1084 483.9 1089 C481 1080.8 471 1078.8 465.3 1085 Z" fill="#222" stroke="none"/><g transform="translate(995.4 0) scale(-1 1)"><path d="M462 1082 L462 1091.2 L471.3 1091.2 L468.5 1088.3 C472.5 1084.3 478.8 1084 483.9 1089 C481 1080.8 471 1078.8 465.3 1085 Z" fill="#222" stroke="none"/></g><path d="M570.3 1094.6 L582.6 1084.7" stroke="#222" stroke-width="3.8" stroke-linecap="butt"/><path d="M578.6 1086.3 L580.9 1089.2" stroke="#fff" stroke-width="0.9"/><path d="M579.8 1075.4 V1079 M571 1078.3 L573.8 1080.8 M589.3 1078 L586.7 1080.6 M588.5 1086.3 H592 M586 1092.5 L588.6 1095.3" stroke="#333" stroke-width="1.5"/><path d="M953.5 1080.5 H964.5 L960.5 1094.2 H949.5 Z" fill="#222" stroke="none"/><path d="M952.3 1088.5 H960.6 L959.6 1092.3 H951.2 Z" fill="#fff" stroke="none"/><path d="M627.8 1135.2 H630.6" stroke="#222" stroke-width="2.6" stroke-linecap="butt"/><path d="M633.3 1135.2 H646.2" stroke="#222" stroke-width="2.6" stroke-linecap="butt"/><path d="M682.5 1135.2 H695.6" stroke="#222" stroke-width="2.6" stroke-linecap="butt"/><path d="M677.2 1133.6000000000001 V1136.6000000000001" stroke="#333" stroke-width="1.1" stroke-linecap="butt"/><path d="M627.8 1141.2 H630.6" stroke="#222" stroke-width="2.6" stroke-linecap="butt"/><path d="M633.3 1141.2 H646.2" stroke="#222" stroke-width="2.6" stroke-linecap="butt"/><path d="M682.5 1141.2 H695.6" stroke="#222" stroke-width="2.6" stroke-linecap="butt"/><path d="M677.2 1139.6000000000001 V1142.6000000000001" stroke="#333" stroke-width="1.1" stroke-linecap="butt"/><path d="M627.8 1147.2 H630.6" stroke="#222" stroke-width="2.6" stroke-linecap="butt"/><path d="M633.3 1147.2 H646.2" stroke="#222" stroke-width="2.6" stroke-linecap="butt"/><path d="M682.5 1147.2 H695.6" stroke="#222" stroke-width="2.6" stroke-linecap="butt"/><path d="M677.2 1145.6000000000001 V1148.6000000000001" stroke="#333" stroke-width="1.1" stroke-linecap="butt"/><path d="M726.4 1135.2 H743.2" stroke="#222" stroke-width="2.4" stroke-linecap="butt"/><path d="M726.4 1141.2 H740" stroke="#222" stroke-width="2.4" stroke-linecap="butt"/><path d="M726.4 1147.2 H743.2" stroke="#222" stroke-width="2.4" stroke-linecap="butt"/><path d="M818.7 1135 V1149 M817 1137 L818.7 1135 L820.4 1137 M817 1147 L818.7 1149 L820.4 1147" stroke="#444" stroke-width="1.1"/><rect x="879.3" y="1133.5" width="19" height="14.5" stroke="#333" stroke-width="1.3" fill="none"/><path d="M879.3 1138.3 H898.3 M879.3 1143.2 H898.3 M884 1133.5 V1148 M888.8 1133.5 V1148 M893.6 1133.5 V1148" stroke="#333" stroke-width="1.1"/><path d="M968.3 1136.3 H964.5 A4.8 4.8 0 0 0 964.5 1145.9 H968.3 M971.2 1136.3 H975 A4.8 4.8 0 0 1 975 1145.9 H971.2 M964.8 1141.1 H974.7" stroke="#222" stroke-width="2.1" fill="none" stroke-linecap="butt"/><rect x="1009.2" y="1133.6" width="20" height="14.4" rx="1.5" stroke="#333" stroke-width="1.4" fill="none"/><path d="M1011.8 1146 L1016.5 1139.8 L1019.5 1143 L1022 1141 L1026.5 1146 Z" fill="#222" stroke="none"/><circle cx="1024.3" cy="1137.3" r="1.2" fill="#222" stroke="none"/><path d="M1061.5 1140.8 H1075.5" stroke="#222" stroke-width="2.8" stroke-linecap="butt"/><circle cx="1125.3" cy="1139.5" r="6.6" stroke="#222" stroke-width="1.6" fill="none"/><path d="M1125.5 1135.3 V1140 H1123" stroke="#222" stroke-width="1.2" fill="none"/><path d="M1164.6 1132.2 H1179.7 V1142.5 L1175.5 1146.7 H1164.6 Z" fill="#2a2a2a" stroke="none"/><path d="M1175.8 1143 H1179 L1175.8 1146.2 Z" fill="#bbb" stroke="none"/><path d="M1223.5 1136 L1217 1141 L1223.5 1146 M1235 1136 L1241.5 1141 L1235 1146 M1231.8 1133.5 L1226.8 1148.5" stroke="#222" stroke-width="1.6" fill="none"/></svg>
<div style="left:1767.7px;top:1098.5px;width:1.2px;height:21px;background:#222;"></div>
<div style="left:1917px;top:641px;width:18px;height:46px;background:rgba(200,210,235,.45);"></div>
<div style="left:1440.7px;top:526.7px;width:274px;height:45px;border:3px solid #1f4a70;"></div>
<div style="left:1371.5px;top:638.6px;width:565px;height:50.5px;border:3px solid #1f4a70;"></div>
<svg style="left:0;top:0" width="1959" height="1347" viewBox="0 0 1959 1347" fill="none"><path d="M350.0 419.5 L413.3 435.1" stroke="#1f4a6e" stroke-width="3.2" fill="none"/><path d="M423.0 437.5 L410.0 440.0 L412.7 429.3 Z" fill="#1f4a6e" stroke="none"/><path d="M732.0 544.4 L1431.0 535.3" stroke="#1f4a6e" stroke-width="4" fill="none"/><path d="M1441.0 535.2 L1429.1 541.2 L1428.9 529.6 Z" fill="#1f4a6e" stroke="none"/><path d="M732.0 579.8 L1361.1 650.5" stroke="#1f4a6e" stroke-width="4" fill="none"/><path d="M1371.0 651.6 L1358.4 656.0 L1359.7 644.5 Z" fill="#1f4a6e" stroke="none"/></svg>
<div style="left:297.9px;top:368.9px;width:61.2px;height:61.2px;background:#4093b6;border:3.5px solid #1f4a6e;border-radius:50%;"></div>
<svg style="left:0;top:0" width="1959" height="1347" viewBox="0 0 1959 1347"><path d="M327.0 416.9 V395.6 L320.8 398.1 L320.2 392.9 L328.2 389.6 H333.4 V416.9 Z" fill="#fff"/></svg>
<div style="left:678.9px;top:531.8px;width:61.2px;height:61.2px;background:#4093b6;border:3.5px solid #1f4a6e;border-radius:50%;"></div>
<span class="t" style="left:679.5px;width:60px;text-align:center;top:555.7px;font-size:40px;font-weight:bold;color:#fff;">2</span>
<div style="left:1807.1000000000001px;top:1102.2px;width:61.2px;height:61.2px;background:#4093b6;border:3.5px solid #1f4a6e;border-radius:50%;"></div>
<span class="t" style="left:1807.7px;width:60px;text-align:center;top:1126.1px;font-size:40px;font-weight:bold;color:#fff;">3</span>
<div style="left:1811.4px;top:1013.4px;width:61.2px;height:61.2px;background:#4093b6;border:3.5px solid #1f4a6e;border-radius:50%;"></div>
<span class="t" style="left:1812px;width:60px;text-align:center;top:1037.3px;font-size:40px;font-weight:bold;color:#fff;">4</span>
<div style="left:456.5px;top:310.7px;width:62px;height:62px;background:#4093b6;border:3.5px solid #1f4a6e;border-radius:50%;"></div>
<span class="t" style="left:457.5px;width:60px;text-align:center;top:335.0px;font-size:40px;font-weight:bold;color:#fff;">5</span>
</body></html>
